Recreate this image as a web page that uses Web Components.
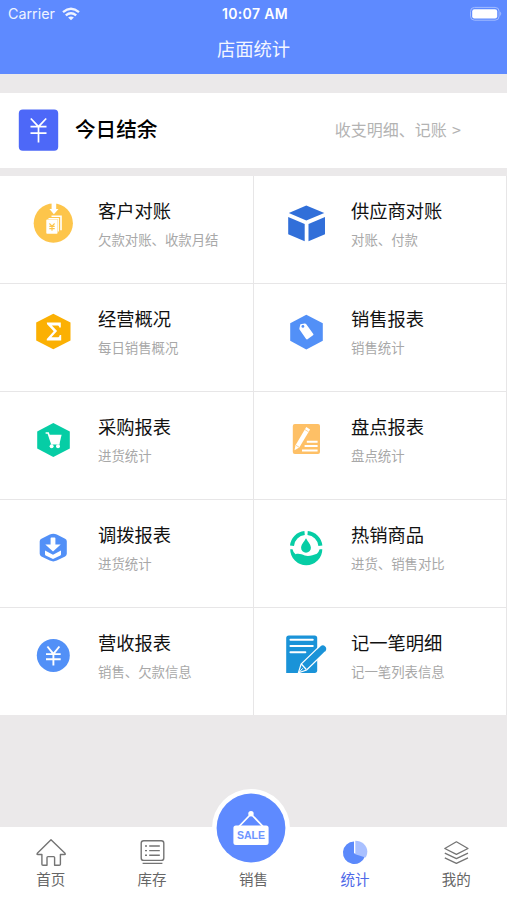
<!DOCTYPE html>
<html lang="zh-CN">
<head>
<meta charset="utf-8">
<meta name="viewport" content="width=device-width, initial-scale=1">
<title>店面统计</title>
<style>
    body{
        margin:0;
        font-family:"Noto Sans CJK SC", sans-serif;
    }
</style>
</head>
<body>
<store-page>
    <page-header slot="header" time="10:07 AM">店面统计</page-header>
    <balance-card>
        今日结余
        <span slot="link">收支明细、记账 &gt;</span>
    </balance-card>
    <report-grid>
        <report-item icon="customer">客户对账<span slot="hint">欠款对账、收款月结</span></report-item>
        <report-item icon="cube">供应商对账<span slot="hint">对账、付款</span></report-item>
        <report-item icon="sigma">经营概况<span slot="hint">每日销售概况</span></report-item>
        <report-item icon="tag">销售报表<span slot="hint">销售统计</span></report-item>
        <report-item icon="cart">采购报表<span slot="hint">进货统计</span></report-item>
        <report-item icon="check">盘点报表<span slot="hint">盘点统计</span></report-item>
        <report-item icon="transfer">调拨报表<span slot="hint">进货统计</span></report-item>
        <report-item icon="drop">热销商品<span slot="hint">进货、销售对比</span></report-item>
        <report-item icon="yen">营收报表<span slot="hint">销售、欠款信息</span></report-item>
        <report-item icon="note">记一笔明细<span slot="hint">记一笔列表信息</span></report-item>
    </report-grid>
    <tab-bar slot="footer">
        <tab-item icon="home">首页</tab-item>
        <tab-item icon="stock">库存</tab-item>
        <tab-item icon="sale" main>销售</tab-item>
        <tab-item icon="stats" active>统计</tab-item>
        <tab-item icon="mine">我的</tab-item>
    </tab-bar>
</store-page>

<script>
// 48x48 icons of the report grid
const REPORT_ICONS = {
    customer: `
        <circle cx="24.3" cy="24.2" r="19.6" fill="#fdc54b"/>
        <path d="M22.6 3h4.6v7h2.3l-4.6 5.2-4.5-5.2h2.2z" fill="#fff"/>
        <path d="M22.5 17.2h9.5v14" fill="none" stroke="#fff" stroke-width="1.6"/>
        <path d="M19.5 19.6h9.8v13" fill="none" stroke="#fff" stroke-width="1.2"/>
        <rect x="17.3" y="20.6" width="11.2" height="14.2" rx=".8" fill="#fff"/>
        <path d="M20.4 24.5l2.6 2.6 2.6-2.6M20.3 27.4h5.4M20.3 29.6h5.4M23 27v4.8" fill="none" stroke="#fdc54b" stroke-width="1.1"/>`,
    cube: `
        <g fill="#316fd9">
            <path d="M24.3 6.4L42.3 13.9 24.3 21.5 6.8 13.9z"/>
            <path d="M6.2 18.1L22.7 25v17.3L6.2 35.3z"/>
            <path d="M43 18.1L26.5 25v17.3L43 35.3z"/>
        </g>`,
    sigma: `
        <path d="M24.3 6.8L41.5 15.6v17.8L24.3 42.2 7.2 33.4V15.6z" fill="#fbb003"/>
        <path d="M17.8 15.6h14v5h-1.5c-.2-1.5-.8-2-2.2-2h-5.2l5.2 5.5-5.7 6.2h6c1.5 0 2-.6 2.3-2.3h1.5v5.6h-14.4v-1.7l6.9-7.6-6.6-7z" fill="#fff"/>`,
    tag: `
        <path d="M24.3 7.8L40.8 16.3v17.4L24.3 42.4 8.2 33.7V16.3z" fill="#5290f7"/>
        <path d="M18.4 17.2l4.3-.7q1-.1 1.6.7l7 9.8q.5.8-.3 1.3l-5.5 4q-.8.5-1.4-.3l-6.4-9.3q-.5-.6-.3-1.5z" fill="#fff"/>
        <circle cx="20.9" cy="19.4" r="1.4" fill="#5290f7"/>`,
    cart: `
        <path d="M24.3 8L40.8 16.4v17.2L24.3 42.1 8.2 33.6V16.4z" fill="#06cda5"/>
        <path d="M16.6 18h2.6l3.6 10.6h7.8" fill="none" stroke="#fff" stroke-width="1.7"/>
        <path d="M19.8 19.8h12.8l-2 8.4h-8z" fill="#fff"/>
        <circle cx="22.6" cy="31.2" r="2" fill="#fff"/><circle cx="29" cy="31.2" r="2" fill="#fff"/>`,
    check: `
        <rect x="10.8" y="9" width="27.2" height="30" rx="2" fill="#fec066"/>
        <path d="M12.5 35.3l1-5L24.3 12l3.8 2.4-10.8 18.2z" fill="#fff"/>
        <path d="M22.8 14.5l3.8 2.4M13.8 30.2l3.4 2.1" stroke="#fec066" stroke-width=".7"/>
        <path d="M24.8 26.8h10.8M22.6 31h13M20 35.6h15.6" stroke="#fff" stroke-width="2"/>`,
    transfer: `
        <path d="M20.8 11.6q3.5-1.6 7 0l8.3 4.1q1.7.8 1.7 2.6v12.5q0 1.8-1.7 2.6l-8.3 4.2q-3.5 1.6-7 0l-8.4-4.2q-1.7-.8-1.7-2.6V18.3q0-1.8 1.7-2.6z" fill="#5290f7"/>
        <path d="M21.6 15.3q0-.8.8-.8h3.2q.8 0 .8.8v6.3h5.3L24 28.4l-7.7-6.8h5.3z" fill="#fff"/>
        <path d="M16 27.6l8 4.2 8-4.2v3.7q0 .7-.7 1.1L24 35.9l-7.3-3.5q-.7-.4-.7-1.1z" fill="#fff"/>`,
    drop: `
        <g fill="none" stroke="#06cda5" stroke-width="4">
            <path d="M22.6 10.1A14 14 0 0 0 10 22.8"/>
            <path d="M25.6 10.1A14 14 0 0 1 38.4 22.8"/>
        </g>
        <path d="M24 15.2c2 3.8 4.9 6.3 4.9 9.6a4.9 4.9 0 0 1-9.8 0c0-3.3 2.9-5.8 4.9-9.6z" fill="#06cda5"/>
        <path d="M8.2 26.2h2.3q.7 3.2 3 5c3.5-1 6.2.2 9.2 1.2 4 1.3 8.2-.3 12.2-1.6q2-2 2.7-4.6h2.7a16 16 0 0 1-32.1 0z" fill="#06cda5"/>`,
    yen: `
        <circle cx="24.3" cy="24.4" r="16.5" fill="#5290f7"/>
        <path d="M18.4 15.5l6 7.4 6-7.4M17 23.1h14.7M17 28.3h14.7M24.4 22.8v11.7" fill="none" stroke="#fff" stroke-width="1.9"/>`,
    note: `
        <path d="M6.8 4.5h25.8q2.6 0 2.6 2.6v32.2q0 2.6-2.6 2.6H4.2V7.1q0-2.6 2.6-2.6z" fill="#1a93d8"/>
        <path d="M8.4 8.8h22.4M8.4 15h22.4M8.4 21.2h15" stroke="#fff" stroke-width="1.9" stroke-linecap="round"/>
        <path d="M16.2 42.3l2.9-9.3 19.7-18q2.4-1.6 4.4.6t.2 4.6L24.6 39z" fill="#1a93d8"/>
        <path d="M38 14.9L19.1 33l-2.7 8.9 8.2-2.9 18.6-18" fill="none" stroke="#fff" stroke-width="1.2"/>
        <path d="M19.4 33l4.9 5.5" fill="none" stroke="#fff" stroke-width="1.2"/>
        <path d="M17.1 41.3l3.6-4" stroke="#fff"/>`
};

// 40x36 icons of the tab bar
const TAB_ICONS = {
    home: `<path d="M20 5.8L6.3 19.3q-.9 1.2.6 1.2h4v9.7q0 1.1 1.1 1.1h4v-7.7q0-1 1-1h5.6q1 0 1 1v7.7h4.7q1.1 0 1.1-1.1v-9.7h4q1.5 0 .6-1.2z"/>`,
    stock: `
        <rect x="9.2" y="6.8" width="22.6" height="19.6" rx="2.5"/>
        <path d="M17.2 12h10.6M17.2 16.6h10.6M17.2 21.2h10.6M13 12h2M13 16.6h2M13 21.2h2M10.6 29.4h19.8"/>`,
    stats: `
        <path d="M19 7.5a11.3 11.3 0 1 0 11 14.8L19 19.3z" fill="#5b89fb" stroke="none"/>
        <path d="M20.3 6.8c6.4 0 12 4.7 12 10.6 0 2.3-.6 4.3-1.8 6l-10.2-3.2z" fill="#a9c0ff" stroke="none"/>`,
    mine: `<path d="M20.4 7.8l11.6 6.7-11.6 5.8-11.6-5.8zM8.8 19.2l11.6 5.5L32 19.2M8.8 23.8l11.6 5.5L32 23.8" stroke-width="1.3"/>`
};

class StorePage extends HTMLElement {

    constructor() {
        super();
        this.shadow = this.attachShadow({mode: 'open'});
        this.render();
    }

    render() {
        this.shadow.innerHTML =
        `
        <style>
            :host{
                display:flex;
                flex-direction:column;
                height:900px;
                background-color:#ebe9ea;
                overflow:hidden;
            }
            main{
                flex:1;
                display:flex;
                flex-direction:column;
                gap:8px;
                padding-top:19px;
            }
        </style>
        <slot name="header"></slot>
        <main><slot></slot></main>
        <slot name="footer"></slot>
        `;
    }
}

class PageHeader extends HTMLElement {

    constructor() {
        super();
        this.shadow = this.attachShadow({mode: 'open'});
        this.render();
    }

    render() {
        this.shadow.innerHTML =
        `
        <style>
            :host{
                display:block;
                height:74px;
                background-color:#5e8aff;
                color:#fff;
            }
            .status{
                display:grid;
                grid-template-columns:1fr auto 1fr;
                align-items:center;
                height:27px;
                padding:0 5px 0 8px;
                font-family:Inter, sans-serif;
                font-size:14.3px;
            }
            .carrier{
                display:flex;
                align-items:center;
                gap:7px;
                opacity:.9;
            }
            .time{
                font-weight:600;
                font-size:14px;
                letter-spacing:.35px;
            }
            .battery{
                justify-self:end;
            }
            svg{
                display:block;
            }
            h1{
                margin:0;
                font-size:18.3px;
                font-weight:400;
                line-height:43px;
                text-align:center;
                opacity:.93;
            }
        </style>
        <div class="status">
            <div class="carrier">
                <span>Carrier</span>
                <svg width="18" height="14" viewBox="0 0 18 14" fill="none" stroke="#fff" stroke-width="2.4">
                    <path d="M1 5.1q8-6.6 16 0M3.8 8.4q5.2-4.3 10.4 0"/>
                    <path d="M9 13.2L6.1 10.6q2.9-2.3 5.8 0z" fill="#fff" stroke="none"/>
                </svg>
            </div>
            <span class="time">${this.getAttribute('time')}</span>
            <svg class="battery" width="33" height="16" viewBox="0 0 33 16">
                <rect x="1.5" y="1.4" width="28.6" height="12.8" rx="4" fill="none" stroke="#a3bcff" stroke-width="1"/>
                <rect x="3.2" y="3.2" width="25" height="9.2" rx="2.2" fill="#fff"/>
                <path d="M31.2 5.6q2 2.2 0 4.4z" fill="#a3bcff"/>
            </svg>
        </div>
        <h1><slot></slot></h1>
        `;
    }
}

class BalanceCard extends HTMLElement {

    constructor() {
        super();
        this.shadow = this.attachShadow({mode: 'open'});
        this.render();
    }

    render() {
        this.shadow.innerHTML =
        `
        <style>
            :host{
                display:flex;
                align-items:center;
                box-sizing:border-box;
                height:75px;
                padding:0 46px 2px 18px;
                background-color:#fff;
            }
            .title{
                flex:1;
                margin-left:16px;
                padding-bottom:4px;
                color:#000;
                font-size:20.6px;
                font-weight:500;
                line-height:30px;
            }
            .link{
                padding-bottom:2px;
                color:#b3b3b3;
                font-size:16px;
                line-height:24px;
                word-spacing:1.8px;
            }
        </style>
        <svg width="41" height="42" viewBox="0 0 41 42">
            <rect x=".8" y=".6" width="39.4" height="41.2" rx="4" fill="#4d68f8"/>
            <path d="M12.8 9.5l7.7 8.2 7.7-8.2M12.5 17.7h16M12.5 24.2h16M20.5 17.5v16" fill="none" stroke="#fff" stroke-width="1.7"/>
        </svg>
        <div class="title"><slot></slot></div>
        <div class="link"><slot name="link"></slot></div>
        `;
    }
}

class ReportGrid extends HTMLElement {

    constructor() {
        super();
        this.shadow = this.attachShadow({mode: 'open'});
        this.render();
    }

    render() {
        this.shadow.innerHTML =
        `
        <style>
            :host{
                display:grid;
                grid-template-columns:254px 253px;
                grid-template-rows:repeat(4, 108px) 107px;
            }
        </style>
        <slot></slot>
        `;
    }
}

class ReportItem extends HTMLElement {

    constructor() {
        super();
        this.shadow = this.attachShadow({mode: 'open'});
        this.render();
    }

    render() {
        this.shadow.innerHTML =
        `
        <style>
            :host{
                display:flex;
                gap:21px;
                box-sizing:border-box;
                padding:23px 0 0 29px;
                background-color:#fff;
                border-right:1px solid #e7e6e7;
                border-bottom:1px solid #e7e6e7;
            }
            :host(:nth-child(even)){
                padding-left:28px;
            }
            :host(:nth-last-child(-n+2)){
                border-bottom:none;
            }
            svg{
                flex:none;
            }
            .title{
                color:#111;
                font-size:18.3px;
                line-height:22px;
            }
            .hint{
                margin-top:8px;
                color:#a8a8a8;
                font-size:13.4px;
                line-height:20px;
            }
        </style>
        <svg width="48" height="48" viewBox="0 0 48 48">${REPORT_ICONS[this.getAttribute('icon')]}</svg>
        <div>
            <div class="title"><slot></slot></div>
            <div class="hint"><slot name="hint"></slot></div>
        </div>
        `;
    }
}

class TabBar extends HTMLElement {

    constructor() {
        super();
        this.shadow = this.attachShadow({mode: 'open'});
        this.render();
    }

    render() {
        this.shadow.innerHTML =
        `
        <style>
            :host{
                display:grid;
                grid-template-columns:repeat(5, 1fr);
                height:73px;
                background-color:#fff;
            }
        </style>
        <slot></slot>
        `;
    }
}

class TabItem extends HTMLElement {

    constructor() {
        super();
        this.shadow = this.attachShadow({mode: 'open'});
        this.render();
    }

    icon() {
        // the middle tab rises over the edge of the bar
        if (this.hasAttribute('main')) {
            return `
            <svg class="bubble" width="78" height="78" viewBox="0 0 78 78">
                <circle cx="39" cy="39" r="39" fill="#fff"/>
                <circle cx="39" cy="39" r="34.4" fill="#5e8aff"/>
                <path d="M27 37.5L39 25l12 12.5" fill="none" stroke="#fff" stroke-width="1.8"/>
                <circle cx="39" cy="24.8" r="2.7" fill="#fff"/>
                <rect x="21.4" y="36.5" width="35.2" height="19.6" rx="2.5" fill="#fff"/>
                <text x="39" y="49.6" text-anchor="middle" textLength="28" font-family="Liberation Sans, sans-serif" font-size="10.5" font-weight="700" fill="#6e95ff">SALE</text>
            </svg>`;
        }
        return `<svg width="40" height="36" viewBox="0 0 40 36">${TAB_ICONS[this.getAttribute('icon')]}</svg>`;
    }

    render() {
        this.shadow.innerHTML =
        `
        <style>
            :host{
                position:relative;
                display:flex;
                flex-direction:column;
                align-items:center;
                justify-content:flex-end;
                box-sizing:border-box;
                padding-bottom:11px;
                color:#666;
                font-size:14.5px;
                line-height:20px;
            }
            :host([active]){
                color:#4d68e8;
            }
            svg{
                margin-bottom:-1px;
                fill:none;
                stroke:#747474;
                stroke-width:1.4;
                stroke-linejoin:round;
            }
            .bubble{
                position:absolute;
                top:-38px;
                left:calc(50% - 41.5px);
                stroke:none;
            }
        </style>
        ${this.icon()}
        <span><slot></slot></span>
        `;
    }
}

customElements.define('store-page', StorePage);
customElements.define('page-header', PageHeader);
customElements.define('balance-card', BalanceCard);
customElements.define('report-grid', ReportGrid);
customElements.define('report-item', ReportItem);
customElements.define('tab-bar', TabBar);
customElements.define('tab-item', TabItem);
</script>
</body>
</html>
